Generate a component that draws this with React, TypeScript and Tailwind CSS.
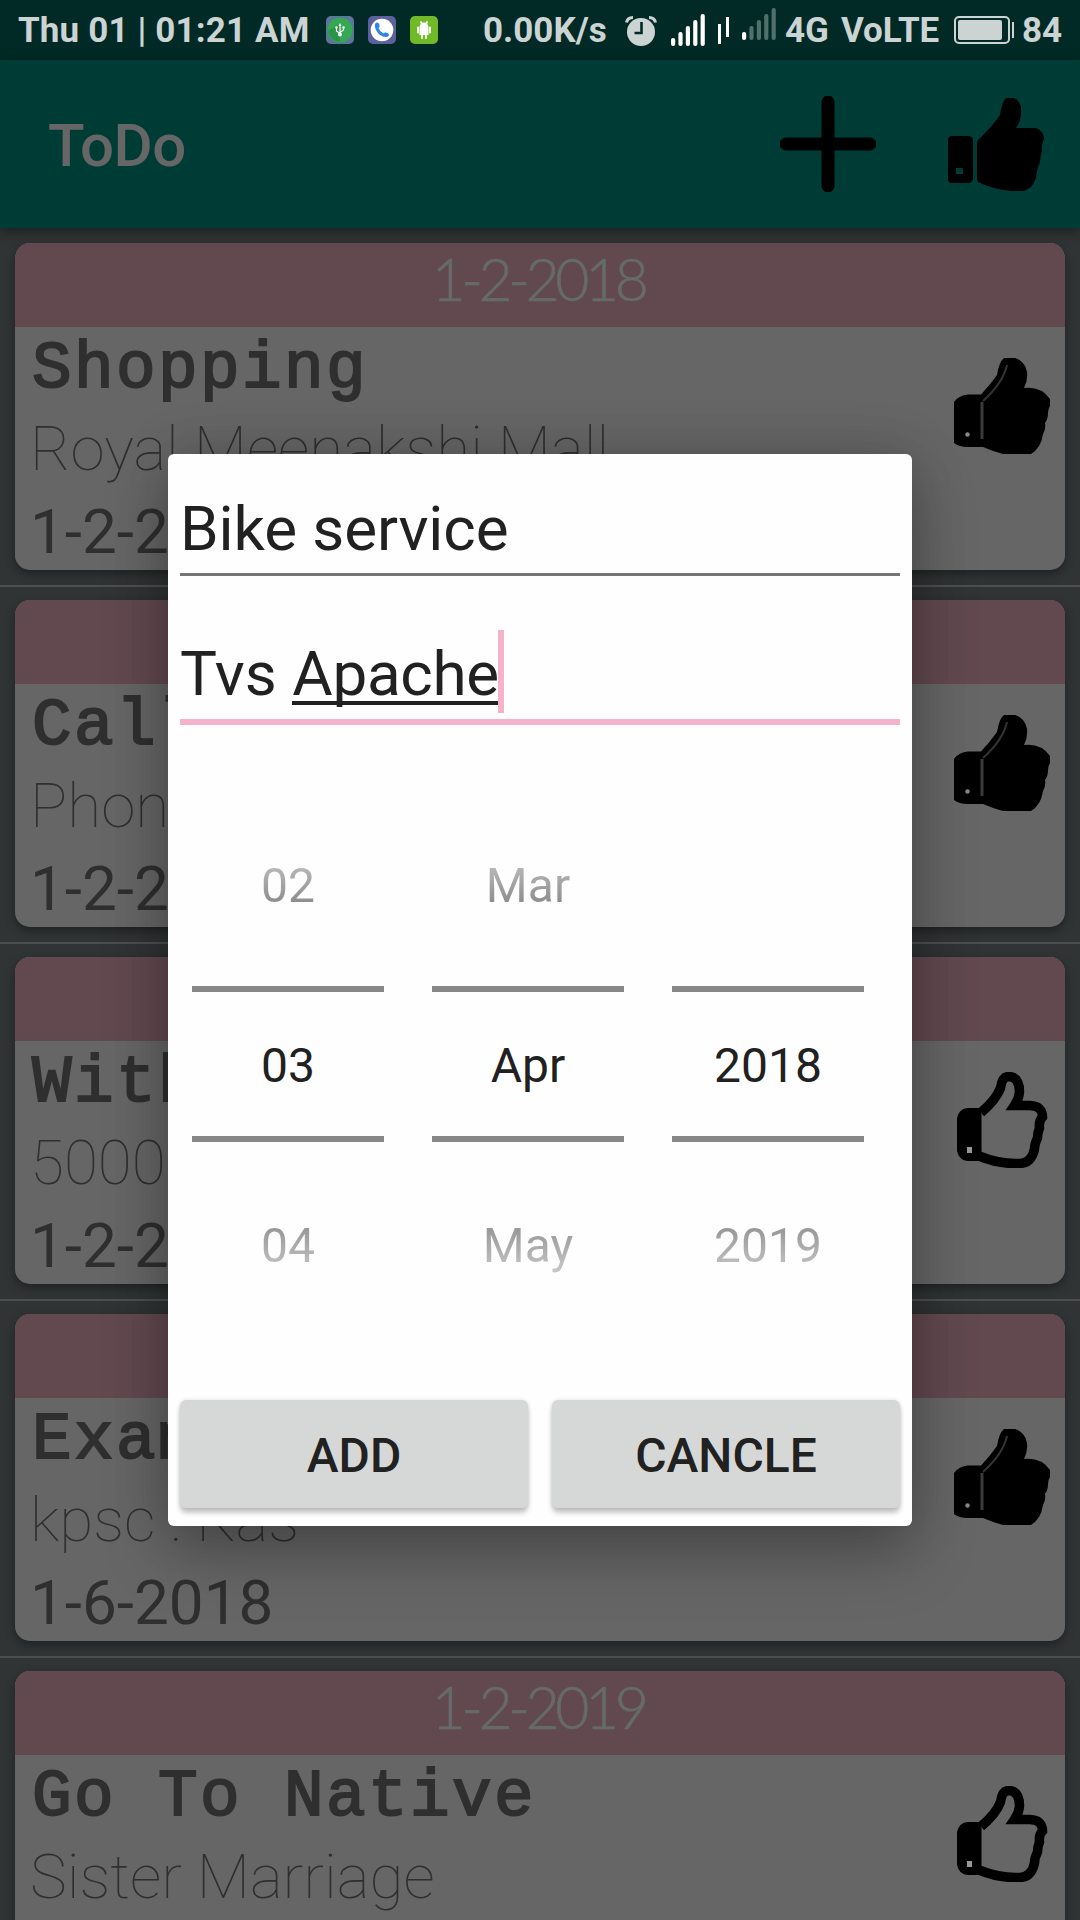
import React from "react";

type Todo = { date: string; title: string; note: string; done: boolean };

const todos: Todo[] = [
  { date: "1-2-2018", title: "Shopping", note: "Royal Meenakshi Mall", done: true },
  { date: "1-2-2018", title: "Call", note: "Phone", done: true },
  { date: "1-2-2018", title: "With", note: "5000", done: false },
  { date: "1-6-2018", title: "Exam", note: "kpsc : Kas", done: true },
  { date: "1-2-2019", title: "Go To Native", note: "Sister Marriage", done: false },
];

function ThumbSolid() {
  return (
    <svg viewBox="0 0 96 96" className="size-24 shrink-0">
      <path d="M0 44Q5 37 14 36.500H27Q36 27 43 17Q45 4 50 0H61Q71 3 73 14Q74 22 70 30Q87 28 96 41V48Q94 51 94 55Q94 61 91 65Q92 71 89 76Q87 90 77 96H49Q38 93 29 89H14Q5 89 0 85Z" />
      <path d="M28 44V81" stroke="#3a3a3a" strokeWidth="3" fill="none" />
      <path d="M29 43Q49 25 53 7" stroke="#333" strokeWidth="2" fill="none" />
      <circle cx="13.500" cy="76.500" r="2.200" fill="#888" />
    </svg>
  );
}

function ThumbOutline() {
  return (
    <svg viewBox="0 0 96 96" className="size-24 shrink-0">
      <path
        d="M27 40.500Q42 28 46.500 16Q48 4.500 55 4.500Q65.500 5 65.500 20Q65 27 60.500 33.500H76Q88.500 34 88.500 45Q84.500 49 85.500 56Q83.500 61 83.500 66Q80.500 72 80.500 77Q77.500 91 66 91.500Q46 92.500 25 84"
        fill="none"
        stroke="#000"
        strokeWidth="9.500"
      />
      <path d="M13 36H27.500V89H13Q5 88 3 79V46Q5 37 13 36Z" />
      <rect x="13" y="75" width="5" height="6" fill="#999" />
    </svg>
  );
}

function ThumbBar() {
  return (
    <svg viewBox="0 0 96 96" className="size-24">
      <path
        fillRule="evenodd"
        d="M3 40H21Q25 41 25 44V83Q24 87 20 87H3Q0 86 0 84V43Q0 41 3 40ZM8 72V78H15V72Z"
      />
      <path d="M30 44Q43 32 52 19Q54 5 58 2H66Q74 5 73 17Q73 25 68 32H88Q96 35 96 43Q93 49 94 55Q92 61 92 66Q89 72 88 82Q84 93 76 95H63Q44 93 30 86Q29 84 29 81V47Z" />
    </svg>
  );
}

function TodoCard({ todo }: { todo: Todo }) {
  return (
    <article className="h-[327px] overflow-hidden rounded-[15px] bg-[#666]">
      <header className="h-[84px] bg-[#624950] pr-[4px] text-center font-[Lato] text-[59px] leading-[72px] font-light tracking-[-4.5px] text-[#666b6a] [-webkit-text-stroke:0.6px_#666b6a]">
        {todo.date}
      </header>
      <div className="flex justify-between pr-[15px] pl-[15px] whitespace-nowrap text-[#2f2f2f]">
        <div className="w-[880px]">
          <h2 className="h-[82px] pl-[2px] font-['Liberation_Mono'] text-[66px] leading-[85px] font-normal tracking-[2.400px] [-webkit-text-stroke:2px_#2f2f2f]">
            {todo.title}
          </h2>
          <p className="text-[62px] leading-[80px] font-thin">{todo.note}</p>
          <p className="mt-1 text-[62px] leading-[78px]">{todo.date}</p>
        </div>
        <div className="pt-[31px]">{todo.done ? <ThumbSolid /> : <ThumbOutline />}</div>
      </div>
    </article>
  );
}

function SignalBars({ dim }: { dim?: boolean }) {
  const tops = [24, 18, 12, 6, 0];
  return (
    <svg viewBox="0 0 34 32" className="h-8 w-[34px]">
      {tops.map((t, i) => (
        <rect key={t} x={i * 7.4} y={t} width="4.200" height={32 - t} rx="2" fill={dim && i > 0 ? "#50706c" : "#fff"} />
      ))}
    </svg>
  );
}

function StatusBar() {
  return (
    <div className="flex h-[60px] items-start bg-[#012a26] pl-[18px] text-[35px] leading-[60px] font-bold whitespace-nowrap text-[#ccd4d3]">
      <span className="w-[308px] pt-px tracking-[0.15px]">Thu 01 | 01:21 AM</span>
      <div className="flex w-[157px] gap-[14px] pt-4">
        <svg viewBox="0 0 28 28" className="size-7">
          <rect width="28" height="28" rx="5" fill="#5b7699" />
          <circle cx="14" cy="14" r="12.500" fill="#34a853" />
          <path d="M2 15 14 8V26Q4 25 2 15Z" fill="#2b9448" />
          <path d="M14 9V19M10.500 12V15L14 17.500M17.500 11.500V14L14 16.500" stroke="#fff" strokeWidth="1.200" fill="none" />
          <path d="M14 7 12.500 10H15.500Z" fill="#fff" />
          <circle cx="14" cy="18.500" r="2" fill="#fff" />
          <circle cx="10.500" cy="11.500" r="1.200" fill="#fff" />
          <circle cx="17.500" cy="11.500" r="1.200" fill="#fff" />
        </svg>
        <svg viewBox="0 0 28 28" className="size-7">
          <rect width="28" height="28" rx="5" fill="#5c609c" />
          <circle cx="14" cy="14" r="11.300" fill="#fff" />
          <path d="M7.500 7Q10 5.500 11.500 8.500Q12 11 10.500 12Q12 16 15.500 17.500Q17 15.500 20.500 17.500Q22 20 18.500 21Q12 21.500 8 14Q6 9.500 7.500 7Z" fill="#2d86f0" />
        </svg>
        <svg viewBox="0 0 28 28" className="size-7">
          <rect width="28" height="28" rx="5" fill="#72b92a" />
          <path d="M9.500 11.500A4.500 5 0 0 1 18.500 11.500V19H9.500Z" fill="#fff" />
          <path d="M8 11.500V16.500M20 11.500V16.500M12 18V22M16 18V22M11 6 12 8M17 6 16 8" stroke="#fff" strokeWidth="1.800" strokeLinecap="round" />
        </svg>
      </div>
      <span className="w-[142px] pt-px">0.00K/s</span>
      <svg viewBox="0 0 32 30" className="mt-4 h-[30px] w-8">
        <circle cx="16" cy="16" r="14" fill="#ccd4d3" />
        <path d="M1.500 6.500Q2.500 1.500 8 1.500M30.500 6.500Q29.500 1.500 24 1.500" stroke="#ccd4d3" strokeWidth="3" fill="none" />
        <path d="M16.500 6V17H9.500" stroke="#012a26" strokeWidth="2.600" fill="none" />
      </svg>
      <div className="mt-3.5 ml-3.5">
        <SignalBars />
      </div>
      <div className="ml-[13px] flex gap-[5px] pt-[17px]">
        <div className="mt-[7px] h-5 w-[3px] bg-white" />
        <div className="h-5 w-[3px] bg-white" />
      </div>
      <div className="mt-2 ml-[13px]">
        <SignalBars dim />
      </div>
      <span className="ml-[9px] w-[56px] pt-px">4G</span>
      <span className="w-[113px] pt-px">VoLTE</span>
      <div className="mt-4 flex items-center gap-0.5">
        <div className="h-7 w-14 rounded-[5px] border-2 border-[#ccd4d3] p-0.5">
          <div className="h-5 w-[44px] rounded-xs bg-[#ccd4d3]" />
        </div>
        <div className="h-4 w-0.5 bg-[#ccd4d3]" />
      </div>
      <span className="ml-2 pt-px">84</span>
    </div>
  );
}

function PickerColumn({ values }: { values: string[] }) {
  return (
    <div className="w-[192px] text-center text-[48px] text-[#212121]">
      <div className="h-[150px] bg-linear-to-b from-[#ccc] from-[10%] to-[#727272] to-[60%] bg-clip-text pt-[20px] leading-[60px] text-transparent">
        {values[0]}
      </div>
      <div className="h-[156px] border-y-[6px] border-[#878787] leading-[147px]">{values[1]}</div>
      <div className="h-[150px] bg-linear-to-b from-[#7d7d7d] from-[40%] to-[#ccc] to-[90%] bg-clip-text pt-[74px] leading-[60px] text-transparent">
        {values[2]}
      </div>
    </div>
  );
}

function AddDialog() {
  return (
    <div className="absolute top-[454px] left-[168px] h-[1072px] w-[744px] rounded-md bg-[#fefefe] px-3 text-[#212121] shadow-[0_28px_64px_rgba(0,0,0,0.26),0_0_56px_rgba(0,0,0,0.16)]">
      <div className="h-[122px] border-b-[3px] border-[#757575] pt-[38px] text-[62px] leading-[74px] tracking-[-0.1px] whitespace-nowrap">
        Bike service
      </div>
      <div className="flex h-[149px] items-start border-b-[6px] border-[#f4b3ca] pt-[54px] text-[62px] leading-[88px] tracking-[-0.3px] whitespace-pre">
        <span className="tracking-normal">Tvs </span>
        <span className="h-[75px] border-b-4 border-[#212121]">Apache</span>
        <span className="-ml-px h-[83px] w-1.5 bg-[#f4b3ca]" />
      </div>
      <div className="flex h-[675px] gap-12 px-3 pt-[111px]">
        <PickerColumn values={["02", "03", "04"]} />
        <PickerColumn values={["Mar", "Apr", "May"]} />
        <PickerColumn values={["", "2018", "2019"]} />
      </div>
      <div className="flex gap-6 text-[48px] leading-[111px] font-medium">
        <button className="h-[108px] w-[348px] rounded-md bg-[#d6d8d7] shadow-[0_5px_5px_rgba(0,0,0,0.22),0_0_4px_rgba(0,0,0,0.12)]">ADD</button>
        <button className="h-[108px] w-[348px] rounded-md bg-[#d6d8d7] shadow-[0_5px_5px_rgba(0,0,0,0.22),0_0_4px_rgba(0,0,0,0.12)]">CANCLE</button>
      </div>
    </div>
  );
}

export default function App() {
  return (
    <div className="relative h-[1920px] w-[1080px] overflow-hidden bg-[#303434] font-[Roboto,sans-serif]">
      <StatusBar />
      <div className="relative flex h-[168px] items-center bg-[#003c36] pr-9 pl-12 shadow-[0_4px_12px_rgba(0,0,0,0.4)]">
        <h1 className="flex-1 pt-1 text-[60px] leading-[72px] font-medium tracking-[-0.5px] text-[#666]">ToDo</h1>
        <svg viewBox="0 0 96 96" className="mr-[72px] size-24">
          <path d="M48 6V90M6 48H90" stroke="#000" strokeWidth="13" strokeLinecap="round" />
        </svg>
        <ThumbBar />
      </div>
      <main>
        {todos.map((t, i) => (
          <div key={i} className="h-[357px] border-[#4d4f4f] px-[15px] pt-[13px] not-first:border-t-2 first:pt-[15px]">
            <div className="rounded-[15px] shadow-[0_4px_10px_rgba(0,0,0,0.35)]">
              <TodoCard todo={t} />
            </div>
          </div>
        ))}
      </main>
      <AddDialog />
    </div>
  );
}
